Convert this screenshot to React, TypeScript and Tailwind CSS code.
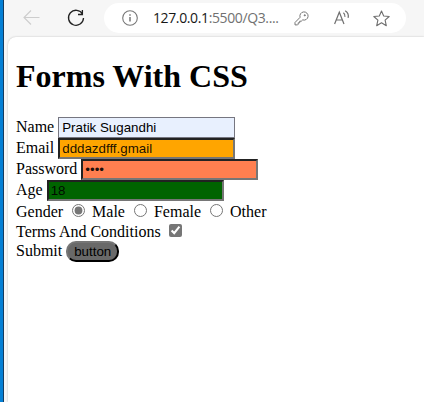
import React from "react";

const label = "whitespace-pre";
const boxLabel = "mt-px whitespace-pre";
const field =
  "h-[21px] w-[177px] shrink-0 rounded-none border-2 border-t-[#222] border-l-[#222] border-r-[#767676] border-b-[#767676] px-[2px] font-['Liberation_Sans',Arial,sans-serif] text-[13.333px] leading-[15px] text-black/90 outline-none";
const radio = "mt-px mr-[3px] ml-[5px] h-[13px] w-[13px] shrink-0 accent-[#767676]";

function Toolbar() {
  return (
    <div className="flex h-[37px] items-start bg-[#f6f6f6]">
      <svg className="mt-[9px] ml-[19px] h-[17px] w-[17px]" viewBox="0 0 17 17" fill="none" stroke="#cdcdcd" strokeWidth="1.1">
        <path d="M16.5 8.5H1M8 1.5l-7 7 7 7" />
      </svg>
      <svg className="mt-[9px] ml-[27px] h-[18px] w-[18px]" viewBox="0 0 18 18" fill="none" stroke="#222" strokeWidth="1.3">
        <path d="M15.6 5.2A7.5 7.5 0 1 0 16.5 9M15.4 1v4.5H11" />
      </svg>
      <div className="mt-[3px] ml-[19px] flex h-[30px] w-[302px] items-start rounded-full bg-white">
        <svg className="mt-[7px] ml-[18px] h-4 w-4" viewBox="0 0 16 16" fill="none" stroke="#777" strokeWidth="1.1">
          <circle cx="8" cy="8" r="7.3" />
          <path d="M8 7v4.5M8 4.2v1.5" strokeWidth="1.5" />
        </svg>
        <div className="mt-[5px] ml-[15px] w-[126px] whitespace-nowrap font-['Open_Sans','Noto_Sans',sans-serif] text-[14px] leading-5 tracking-[-0.38px] text-[#717171]">
          <span className="text-[#171717]">127.0.0.1</span>:5500/Q3....
        </div>
        <svg className="mt-[8px] ml-[15px] h-[15px] w-[15px]" viewBox="0 0 15 15" fill="none" stroke="#767676" strokeWidth="1" strokeLinejoin="round">
          <path d="M6.1 6.3A4.1 4.1 0 1 1 8.7 8.9L7.3 10.2H5.7V11.8H4.2V13.3L3.6 13.9H1V11.5Z" />
          <circle cx="10.8" cy="4.3" r=".6" fill="#767676" />
        </svg>
        <svg className="mt-[7px] ml-[25px] h-[16px] w-[16px]" viewBox="0 0 16 16" fill="none" stroke="#707070" strokeWidth="1.2">
          <path d="M.6 14 5.3 2.2 10 14M2.2 10H8.4M9.4 2.7Q11.3 4.2 10.9 6.8M11.2.7Q15.2 3.3 14.1 7.8" />
        </svg>
        <svg className="mt-[7px] ml-[23px] h-[17px] w-[17px]" viewBox="0 0 17 17" fill="none" stroke="#6e6e6e" strokeWidth="1.1" strokeLinejoin="round">
          <path d="m8.5 1 2.2 5 5.5.5-4.1 3.7 1.2 5.5-4.8-2.9-4.8 2.9 1.2-5.5L.8 6.5 6.3 6Z" />
        </svg>
      </div>
    </div>
  );
}

export default function App() {
  return (
    <div className="flex h-[402px] w-[424px] overflow-hidden bg-[#f6f6f6]">
      <div className="w-1 shrink-0 border-r border-[#143c60] bg-[#0580d5]" />
      <div className="flex min-w-0 flex-1 flex-col">
        <Toolbar />
        <main className="ml-[4px] flex-1 rounded-tl-[8px] bg-white pl-2 font-['Liberation_Serif','Times_New_Roman',serif] text-base leading-[18px] text-black shadow-[0_0_2px_#bbb]">
          <h1 className="pt-[21px] pb-[22px] text-[32px] leading-[37px] font-bold">Forms With CSS</h1>
          <div className="flex h-[21px] items-start">
            <span className={boxLabel}>Name </span>
            <input className="h-[21px] w-[177px] shrink-0 rounded-none border border-[#767680] bg-[#e8f0fe] px-[3px] font-['Liberation_Sans',Arial,sans-serif] text-[13.333px] leading-[15px] text-black outline-none" defaultValue="Pratik Sugandhi" />
          </div>
          <div className="flex h-[21px] items-start">
            <span className={boxLabel}>Email </span>
            <input className={field + " bg-[#ffa500]"} defaultValue="dddazdfff.gmail" />
          </div>
          <div className="flex h-[21px] items-start">
            <span className={boxLabel}>Password </span>
            <input type="password" className={field + " bg-[#ff7f50]"} defaultValue="1234" />
          </div>
          <div className="flex h-[21px] items-start">
            <span className={boxLabel}>Age </span>
            <input className={field + " bg-[#006400]"} defaultValue="18" />
          </div>
          <div className="flex h-[20px] items-start pt-[2px]">
            <span className={label}>Gender </span>
            <input type="radio" name="gender" className={radio} defaultChecked />
            <span className={label}> Male </span>
            <input type="radio" name="gender" className={radio} />
            <span className={label}> Female </span>
            <input type="radio" name="gender" className={radio} />
            <span className={label}> Other</span>
          </div>
          <div className="flex h-[20px] items-start pt-[2px]">
            <span className={label}>Terms And Conditions </span>
            <input type="checkbox" className="mt-px ml-[4px] h-[13px] w-[13px] shrink-0 accent-[#767676]" defaultChecked />
          </div>
          <div className="flex h-[21px] items-start">
            <span className={boxLabel}>Submit </span>
            <button className="h-[21px] w-[53px] rounded-[10px] border-2 border-t-[#767676] border-r-black border-b-black border-l-[#767676] bg-[#696969] font-['Liberation_Sans',Arial,sans-serif] text-[13.333px] leading-[15px] text-black">button</button>
          </div>
        </main>
      </div>
    </div>
  );
}
